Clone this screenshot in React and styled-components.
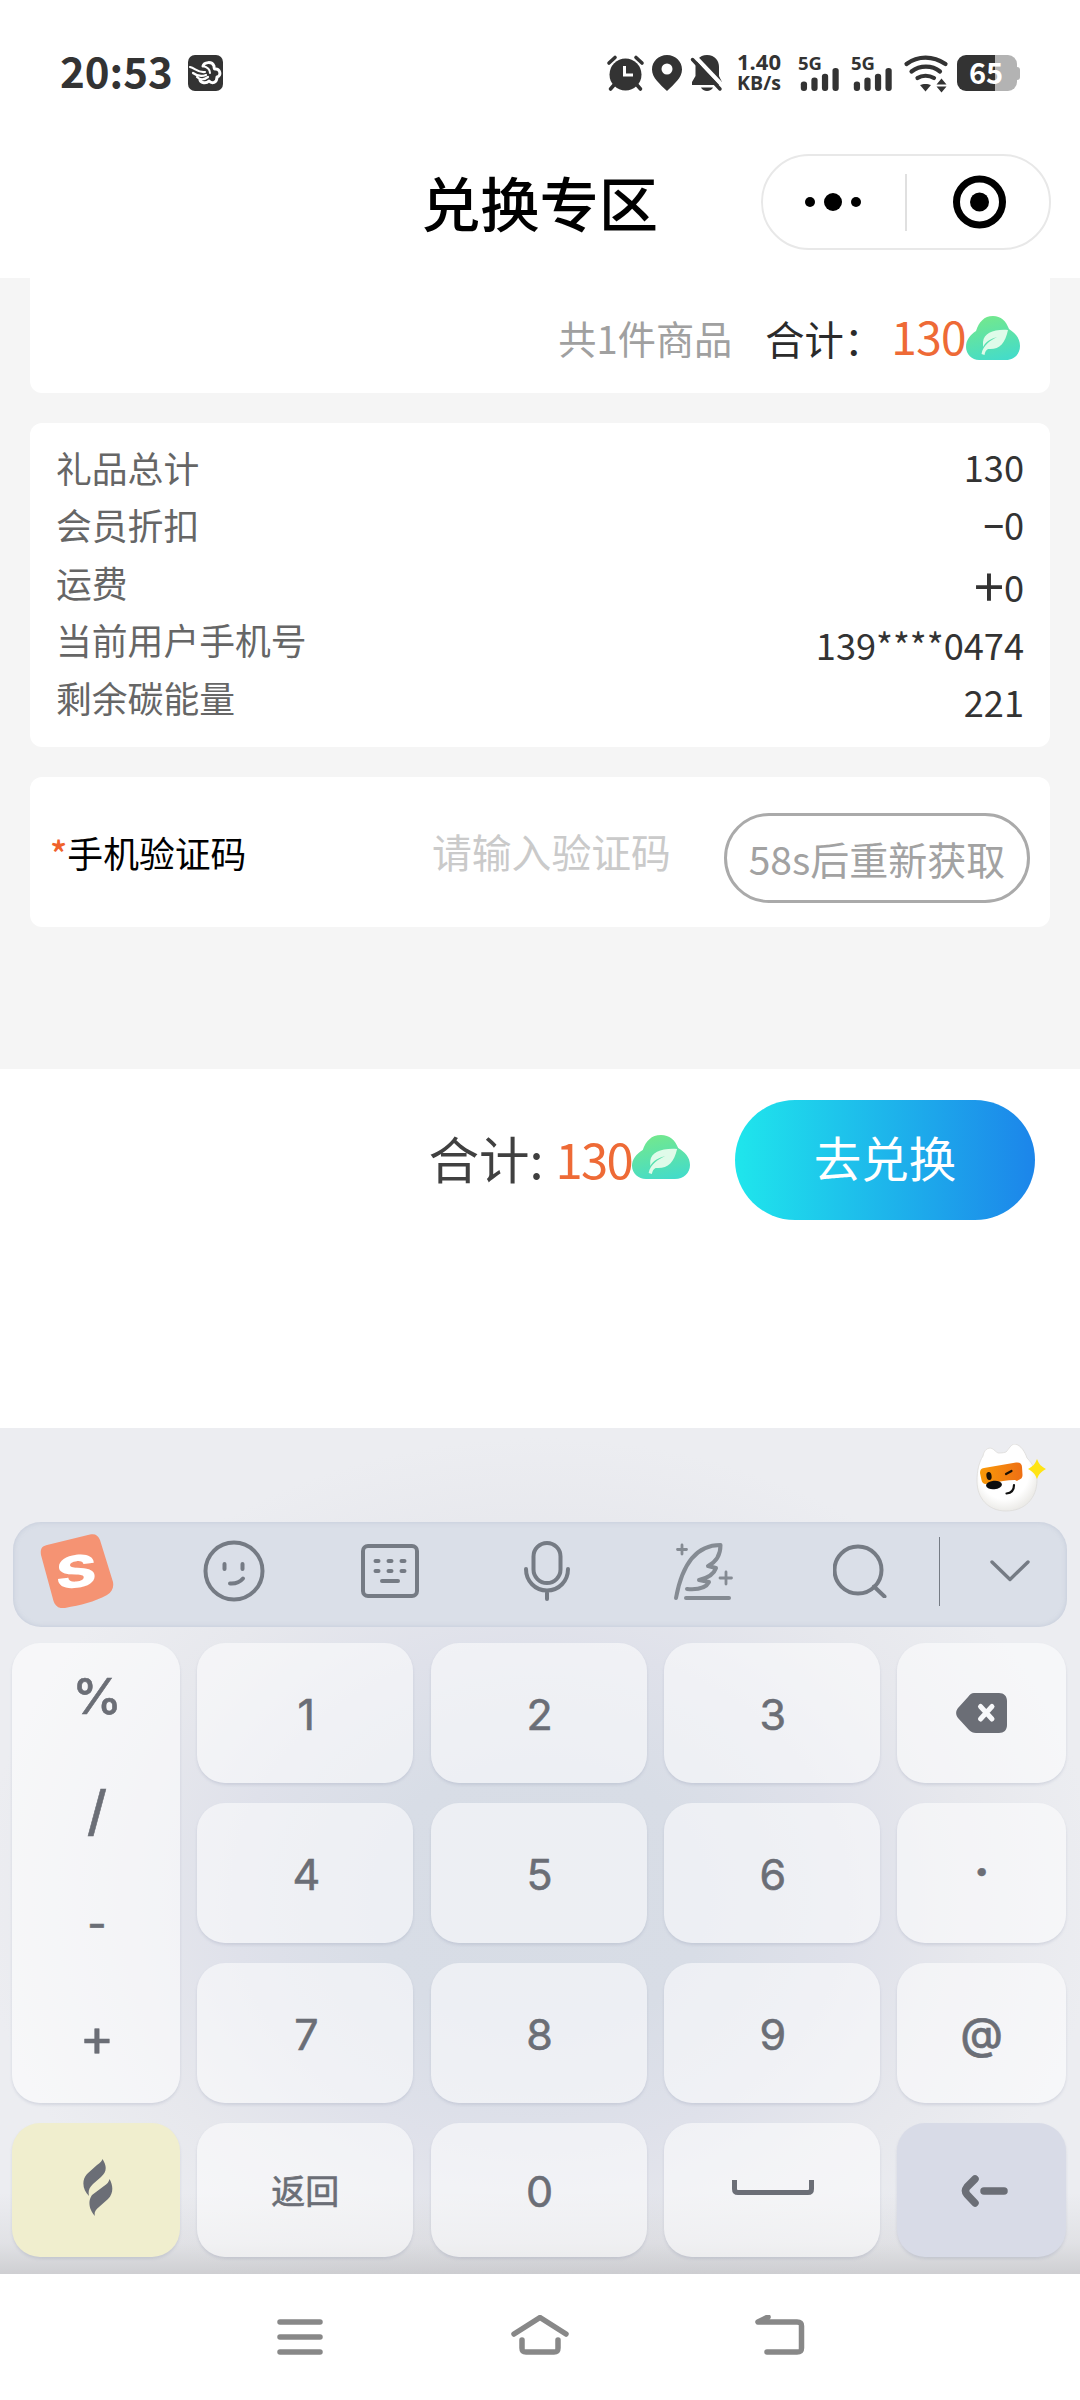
import React from 'react';
import styled, { createGlobalStyle } from 'styled-components';

const GlobalStyle = createGlobalStyle`
  * {
    box-sizing: border-box;
  }
  body {
    margin: 0;
    background: #fff;
    font-family: 'Noto Sans CJK SC', 'Noto Sans', sans-serif;
  }
`;

const Phone = styled.div`
  width: 1080px;
  height: 2400px;
  display: flex;
  flex-direction: column;
  background: #fff;
  overflow: hidden;
`;

/* status bar */

const StatusBar = styled.div`
  height: 126px;
  padding: 55px 63px 35px 60px;
  display: flex;
  align-items: center;
  flex: none;
  color: #333;
`;

const Clock = styled.div`
  font-size: 42px;
  font-weight: 700;
  line-height: 36px;
  width: 128px;
  position: relative;
  top: -3px;
`;

const StatusIcons = styled.div`
  margin-left: auto;
  display: flex;
  align-items: center;
  height: 36px;
`;

const StatusSvg = styled.svg`
  display: block;
  flex: none;
  margin-left: ${(p) => p.$gap || 0}px;
  overflow: visible;
`;

const NetSpeed = styled.div`
  width: 46px;
  margin: -3px 0 0 14px;
  display: flex;
  flex-direction: column;
  align-items: center;
  font-family: 'Open Sans', sans-serif;
  font-weight: 700;
  line-height: 22px;
  white-space: nowrap;
  span:first-child {
    font-size: 22px;
  }
  span:last-child {
    font-size: 19.5px;
  }
`;

const Signal = styled.div`
  width: 42px;
  height: 36px;
  margin-left: ${(p) => p.$gap}px;
  flex: none;
  display: flex;
  flex-direction: column;
  svg {
    margin: -3px 0 0 2px;
  }
`;

const SignalLabel = styled.span`
  font-family: 'Open Sans', sans-serif;
  font-size: 18.5px;
  font-weight: 700;
  line-height: 15px;
  height: 15px;
`;

const Battery = styled.div`
  width: 60px;
  height: 36px;
  margin-left: 9px;
  border-radius: 9px;
  background: linear-gradient(90deg, #333 38px, #b3b3b3 38px);
  color: #fff;
  font-size: 29px;
  font-weight: 700;
  line-height: 32px;
  text-align: center;
  position: relative;
  padding-right: 2px;
  &:after {
    content: '';
    position: absolute;
    right: -3px;
    top: 12px;
    width: 3px;
    height: 13px;
    border-radius: 0 3px 3px 0;
    background: #b3b3b3;
  }
`;

/* title bar */

const TitleBar = styled.div`
  height: 152px;
  flex: none;
  display: grid;
  grid-template-columns: 1fr auto 1fr;
  align-items: center;
`;

const Title = styled.h1`
  grid-column: 2;
  margin: -3px 1px 0 0;
  font-size: 59.3px;
  font-weight: 500;
  line-height: 80px;
  color: #000;
`;

const Capsule = styled.div`
  justify-self: end;
  margin-right: 29px;
  width: 290px;
  height: 96px;
  border: 2px solid #e8e8e8;
  border-radius: 48px;
  display: flex;
  align-items: center;
`;

const CapsuleHalf = styled.div`
  flex: 1;
  display: flex;
  justify-content: center;
  padding-left: 2px;
  &:first-child {
    flex: none;
    width: 142px;
    padding: 0 2px 0 0;
  }
`;

const CapsuleLine = styled.div`
  width: 2px;
  height: 57px;
  background: #e0e0e0;
`;

/* order content */

const Content = styled.div`
  height: 791px;
  flex: none;
  padding: 0 30px;
  background: #f5f5f5;
`;

const Card = styled.div`
  background: #fff;
  border-radius: 12px;
  margin-bottom: 30px;
  display: flex;
`;

const SumCard = styled(Card)`
  height: 115px;
  border-radius: 0 0 12px 12px;
  padding: 4px 30px 0 0;
  justify-content: flex-end;
  align-items: center;
  font-size: 39.3px;
  white-space: nowrap;
`;

const GoodsCount = styled.span`
  color: #a0a0a0;
  font-size: 38.2px;
  margin-right: 33px;
`;

const SumLabel = styled.span`
  color: #2b2b2b;
`;

const Points = styled.span`
  color: #ee6a36;
  font-size: ${(p) => p.$size}px;
  line-height: 1;
  letter-spacing: ${(p) => p.$spacing || 0}px;
  margin-left: ${(p) => p.$gap}px;
  position: relative;
  top: ${(p) => p.$top || 0}px;
`;

const DetailCard = styled(Card)`
  height: 324px;
  padding: 16px 26px 0 26px;
  justify-content: space-between;
`;

const DetailLabels = styled.div`
  display: flex;
  flex-direction: column;
  color: #666;
  font-size: 35.8px;
  line-height: 57.4px;
`;

const DetailValues = styled.div`
  display: flex;
  flex-direction: column;
  text-align: right;
  color: #333;
  font-size: 36.2px;
  line-height: 57.5px;
  margin-top: -1px;
`;

const DetailValue = styled.span`
  margin-top: ${(p) => p.$drop || 0}px;
`;

const Sign = styled.span`
  font-size: ${(p) => p.$size}px;
  font-weight: ${(p) => p.$weight || 400};
  line-height: 0;
  vertical-align: ${(p) => p.$shift || 0}px;
`;

const CodeCard = styled(Card)`
  height: 150px;
  margin-bottom: 0;
  padding: 0 20px 0 20px;
  align-items: center;
`;

const CodeLabel = styled.label`
  flex: 1;
  font-size: 35.8px;
  color: #000;
  em {
    font-style: normal;
    font-weight: 500;
    color: #f0622b;
  }
`;

const CodePlaceholder = styled.span`
  font-size: 39.8px;
  color: #cacaca;
  width: 292px;
  margin-top: -3px;
`;

const ResendButton = styled.button`
  width: 306px;
  height: 90px;
  margin-top: 12px;
  padding: 0;
  border: 3px solid #aaa;
  border-radius: 45px;
  background: #fff;
  color: #a2a2a2;
  font-family: inherit;
  font-size: 39px;
  white-space: nowrap;
`;

/* footer */

const Footer = styled.div`
  height: 182px;
  flex: none;
  padding-right: 45px;
  display: flex;
  justify-content: flex-end;
  align-items: center;
  > svg {
    margin-top: -7px;
  }
`;

const FooterLabel = styled.span`
  font-size: 50.5px;
  color: #404040;
  line-height: 60px;
  margin-top: -6px;
`;

const SubmitButton = styled.button`
  width: 300px;
  height: 120px;
  margin-left: 45px;
  padding: 0 0 7px;
  border: none;
  border-radius: 60px;
  background: linear-gradient(90deg, #1fe6ec, #1c85ea);
  color: #fff;
  font-family: inherit;
  font-size: 47.5px;
`;

/* keyboard */

const Keyboard = styled.div`
  margin-top: auto;
  height: 846px;
  flex: none;
  padding: 16px 13px 0;
  background:
    linear-gradient(180deg, rgba(190, 190, 190, 0) 765px, rgba(180, 180, 182, 0.2) 815px, rgba(170, 170, 172, 0.45) 846px),
    radial-gradient(ellipse 560px 460px at 540px 470px, #d7dce5 0%, #d8dde6 30%, #dfe1ea 55%, #e7e8ed 78%, #ecedf1 100%);
`;

const MascotRow = styled.div`
  height: 78px;
  padding-right: 20px;
  display: flex;
  justify-content: flex-end;
`;

const Toolbar = styled.div`
  height: 105px;
  padding-bottom: 7px;
  border-radius: 28px;
  background: #dadfe8;
  box-shadow: inset 0 0 5px rgba(150, 160, 185, 0.35);
  display: flex;
  align-items: center;
  gap: 28.5px;
`;

const Tool = styled.div`
  width: 128px;
  flex: none;
  display: flex;
  justify-content: center;
`;

const ToolEnd = styled.div`
  flex: 1;
  height: 69px;
  margin-left: -13px;
  border-left: 1px solid #757b84;
  display: flex;
  align-items: center;
  padding-left: 50px;
`;

const Keys = styled.div`
  margin: 16px -1px 0;
  display: grid;
  grid-template-columns: 168px 216px 216px 216px 169px;
  grid-template-rows: 140px 140px 140px 134px;
  column-gap: 17.3px;
  row-gap: 19.9px;
`;

const Key = styled.div`
  border-radius: 28px;
  background: ${(p) => p.$bg || 'rgba(255, 255, 255, 0.54)'};
  box-shadow: 0 2px 3px rgba(120, 130, 160, 0.2);
  display: flex;
  align-items: center;
  justify-content: center;
  color: #6b6e76;
  font-family: Inter, 'Noto Sans CJK SC', sans-serif;
  font-size: ${(p) => p.$size || 43}px;
  font-weight: ${(p) => p.$weight || 400};
  -webkit-text-stroke: 0.6px #6b6e76;
  padding: ${(p) => p.$pad || '2px 0 0 2px'};
`;

const SymbolKey = styled(Key)`
  grid-row: span 3;
  flex-direction: column;
  padding: 0 0 11px 2px;
`;

const KeySymbol = styled.span`
  font-size: ${(p) => p.$size}px;
  font-weight: ${(p) => p.$weight || 400};
  height: 113.5px;
  line-height: 113.5px;
`;

/* system navigation */

const SystemNav = styled.div`
  height: 126px;
  flex: none;
  padding-top: 2px;
  background: #fff;
  display: flex;
  justify-content: center;
  align-items: center;
  gap: 180px;
`;

function CarbonCloud({ width, height, id }) {
  return (
    <svg width={width} height={height} viewBox="0 0 54 44" preserveAspectRatio="none">
      <defs>
        <linearGradient id={id} x1="0.3" y1="0" x2="0.6" y2="1">
          <stop offset="0" stopColor="#74e88c" />
          <stop offset="1" stopColor="#45dcc8" />
        </linearGradient>
      </defs>
      <path
        d="M27 0C35 0 40 5 43 13C49 17 54 22 54 30C54 38 48 44 40 44H13C6 44 0 38 0 31C0 24 4 19 10 15C13 6 18 0 27 0Z"
        fill={`url(#${id})`}
      />
      <path d="M42 14C28 13 18 17 17 26L17 31C20 25 25 23 31 21C25 24 17 29 15.500 38L18.500 39C19 36 20 34 22 33C33 34 39 28 42 14Z" fill="#dffbe9" />
    </svg>
  );
}

function SignalBars({ gap }) {
  return (
    <Signal $gap={gap}>
      <SignalLabel>5G</SignalLabel>
      <svg width="40" height="25" viewBox="0 0 40 25" fill="#333">
        <rect x="0" y="15" width="6.500" height="10" rx="3" />
        <rect x="11" y="11" width="6.500" height="14" rx="3" />
        <rect x="22" y="7" width="6.500" height="18" rx="3" />
        <rect x="33" y="1" width="6.500" height="24" rx="3" />
      </svg>
    </Signal>
  );
}

function StatusRow() {
  return (
    <StatusBar>
      <Clock>20:53</Clock>
      <StatusSvg width="35" height="36" viewBox="0 0 35 36">
        <rect width="35" height="36" rx="7" fill="#333" />
        <g fill="none" stroke="#fff" strokeLinecap="round" strokeLinejoin="round">
          <path d="M2 12C7 13 10 18 17 17M5 18C9 21 13 22 18 20M9 22C12 25 16 25 20 22" strokeWidth="2.200" />
          <path d="M15 11C16 7 24 6 26 11C26 13 26 14 27 14C32 13 34 21 29 22C29 28 24 29 21 26C18 29 13 28 12 25" strokeWidth="3" />
          <path d="M15 11C19 12 22 14 22 18" strokeWidth="2" />
        </g>
      </StatusSvg>
      <StatusIcons>
        <StatusSvg width="37" height="36" viewBox="0 0 37 36">
          <circle cx="18.500" cy="19.500" r="16" fill="#333" />
          <path d="M2 8L8 2.500M29 2.500L35 8M7 30L3.500 34M30 30L33.500 34" stroke="#333" strokeWidth="3.600" strokeLinecap="round" />
          <path d="M17.500 11V20H26" fill="none" stroke="#fff" strokeWidth="3" />
        </StatusSvg>
        <StatusSvg $gap={8} width="30" height="36" viewBox="0 0 30 36">
          <path d="M15 0C23.500 0 30 6.500 30 14.500C30 23 22 29 15 36C8 29 0 23 0 14.500C0 6.500 6.500 0 15 0Z" fill="#333" />
          <circle cx="15" cy="14" r="5.500" fill="#fff" />
        </StatusSvg>
        <StatusSvg $gap={9} width="31" height="36" viewBox="0 0 31 36">
          <path d="M16 0C24 0 28 6 28 12V21L31 27V30H1V27L4.500 21V12C4.500 6 8 0 16 0Z" fill="#333" />
          <path d="M10 32.500H22C20 37 12 37 10 32.500Z" fill="#333" />
          <path d="M3.500 1L32 31" stroke="#fff" strokeWidth="4" />
          <path d="M1.500 4.500L29 34" stroke="#333" strokeWidth="3.500" strokeLinecap="round" />
        </StatusSvg>
        <NetSpeed>
          <span>1.40</span>
          <span>KB/s</span>
        </NetSpeed>
        <SignalBars gap={16} />
        <SignalBars gap={11} />
        <StatusSvg $gap={11} width="44" height="36" viewBox="0 0 44 36">
          <g fill="none" stroke="#333" strokeWidth="4.200" strokeLinecap="round">
            <path d="M2.500 9C14 0.500 29 0.500 41.500 9" />
            <path d="M7.500 16.500C16 10 28 10 36 16.500" />
            <path d="M13.500 23C18 20 25 20 30 23" />
          </g>
          <path d="M16 30C19 28.500 24 28.500 27 30L21.500 36.500Z" fill="#333" />
          <path d="M32.500 29.500L37.500 23.500L42.500 29.500ZM32.500 31.500L37.500 37.500L42.500 31.500Z" fill="#333" />
        </StatusSvg>
        <Battery>65</Battery>
      </StatusIcons>
    </StatusBar>
  );
}

function Mascot() {
  return (
    <svg width="72" height="70" viewBox="0 0 72 70">
      <defs>
        <radialGradient id="fur" cx="0.45" cy="0.4" r="0.6">
          <stop offset="0.7" stopColor="#fff" />
          <stop offset="1" stopColor="#ecebe8" />
        </radialGradient>
        <linearGradient id="mask" x1="0" y1="0" x2="1" y2="0">
          <stop offset="0" stopColor="#fa9a08" />
          <stop offset="1" stopColor="#ee6f14" />
        </linearGradient>
      </defs>
      <path
        d="M8 12C9 6 13 3 17 4.500C19 5.500 21 8 23 9C26 9 28 9 31 8C34 5 36 0 40 0C46 1 50 8 52 14C58 20 62 28 62 36C62 54 50 67 31 67C13 67 2 54 2 37C2 27 4 18 8 12Z"
        fill="url(#fur)"
        stroke="#dddcd9"
        strokeWidth="0.800"
      />
      <path d="M9 24L41 18.500C45 18 47 20 47 23L47.500 31C47.500 35 45 35 42 37L40 36C32 36 24 38 17 38.500L11 40C8 40 7 38 6.500 36L5 29C5 26 6 24.500 9 24Z" fill="url(#mask)" />
      <ellipse cx="14" cy="32" rx="2.600" ry="4" fill="#1c1206" transform="rotate(-8 14 32)" />
      <path d="M31 30L36.500 27" stroke="#1c1206" strokeWidth="2.200" strokeLinecap="round" />
      <ellipse cx="19" cy="41" rx="8" ry="4.300" fill="#0d0d0d" transform="rotate(-6 19 41)" />
      <path d="M39 41C39 46 36 49 31.500 49.500" fill="none" stroke="#111" strokeWidth="2.200" strokeLinecap="round" />
      <path d="M62 15C64.500 21 66 22 71 25C66 28 64.500 29 62 35C59.500 29 58 28 53 25C58 22 59.500 21 62 15Z" fill="#ffe414" />
    </svg>
  );
}

function KeyboardToolbar() {
  const line = { fill: 'none', stroke: '#757b84', strokeWidth: 4, strokeLinecap: 'round', strokeLinejoin: 'round' };
  return (
    <Toolbar>
      <Tool>
        <svg width="74" height="74" viewBox="0 0 74 74">
          <path d="M7 11L50 0.500C55 -0.500 58 1 60 6L73 48C74 54 72 58 67 61C54 68 41 71 25 74C19 75 15 72 13.500 67L1 21C0 15 2 12 7 11Z" fill="#f59373" />
          <text x="0" y="0" transform="translate(36.500 53.500) rotate(-7) skewX(-6) scale(1.420 1)" textAnchor="middle" fontFamily="Inter, sans-serif" fontWeight="800" fontSize="44" fill="#fff">
            S
          </text>
        </svg>
      </Tool>
      <Tool>
        <svg width="62" height="62" viewBox="0 0 62 62" {...line}>
          <circle cx="31" cy="31" r="28.500" />
          <path d="M21.500 24V29M39.500 24V29M27 43.500C33 44 37 42 40 38.500" />
        </svg>
      </Tool>
      <Tool>
        <svg width="58" height="54" viewBox="0 0 58 54" {...line}>
          <rect x="2" y="2" width="54" height="50" rx="5" />
          <path d="M14.500 17H17.500M27.500 17H30.500M40.500 17H43.500M14.500 27H17.500M27.500 27H30.500M40.500 27H43.500M21 37H37" />
        </svg>
      </Tool>
      <Tool>
        <svg width="46" height="60" viewBox="0 0 46 60" {...line}>
          <rect x="9.500" y="2" width="27" height="40" rx="13.500" />
          <path d="M2 28C2 40 11 49.500 23 49.500C35 49.500 44 40 44 28M23 49.500V58" />
        </svg>
      </Tool>
      <Tool>
        <svg width="60" height="60" viewBox="0 0 60 60" {...line} stroke="#858b93">
          <path d="M3 57C7 35 17 4 47.500 4C47.500 12 45 20 35 25L43 27C41 33 35 37 26 39L36 41C33 47 26 49 14 48" />
          <path d="M13 57H56" />
          <path d="M9 4V13M4.500 8.500H13.500M53 31V43M47 37H58.500" strokeWidth="2.800" />
        </svg>
      </Tool>
      <Tool>
        <svg width="54" height="54" viewBox="0 0 54 54" {...line}>
          <circle cx="25" cy="26" r="23.500" />
          <path d="M41 42.500L51.500 52.500" />
        </svg>
      </Tool>
      <ToolEnd>
        <svg width="40" height="24" viewBox="0 0 40 24" {...line} strokeWidth={3.4}>
          <path d="M2 3L20 20.500L38 3" />
        </svg>
      </ToolEnd>
    </Toolbar>
  );
}

const details = [
  { label: '礼品总计', value: '130' },
  { label: '会员折扣', value: <><Sign $size={36} $weight={500}>−</Sign>0</> },
  { label: '运费', value: <><Sign $size={54} $shift={-5}>+</Sign>0</>, drop: 5 },
  { label: '当前用户手机号', value: '139****0474' },
  { label: '剩余碳能量', value: '221' },
];

const symbols = [
  { text: '%', size: 50, weight: 500 },
  { text: '/', size: 54, weight: 500 },
  { text: '-', size: 42 },
  { text: '+', size: 52 },
];

export default function App() {
  return (
    <Phone>
      <GlobalStyle />
      <StatusRow />
      <TitleBar>
        <Title>兑换专区</Title>
        <Capsule>
          <CapsuleHalf>
            <svg width="58" height="20" viewBox="0 0 58 20">
              <circle cx="6" cy="10" r="5" />
              <circle cx="29" cy="10" r="9" />
              <circle cx="52" cy="10" r="5" />
            </svg>
          </CapsuleHalf>
          <CapsuleLine />
          <CapsuleHalf>
            <svg width="54" height="54" viewBox="0 0 54 54">
              <circle cx="27.500" cy="27" r="23" fill="none" stroke="#000" strokeWidth="7" />
              <circle cx="27.500" cy="27" r="9.500" />
            </svg>
          </CapsuleHalf>
        </Capsule>
      </TitleBar>

      <Content>
        <SumCard>
          <GoodsCount>共1件商品</GoodsCount>
          <SumLabel>合计：</SumLabel>
          <Points $size={46} $gap={8} $top={-3} $spacing={-0.6}>130</Points>
          <CarbonCloud id="cloudTop" width={54} height={44} />
        </SumCard>
        <DetailCard>
          <DetailLabels>
            {details.map((d) => (
              <span key={d.label}>{d.label}</span>
            ))}
          </DetailLabels>
          <DetailValues>
            {details.map((d) => (
              <DetailValue key={d.label} $drop={d.drop}>{d.value}</DetailValue>
            ))}
          </DetailValues>
        </DetailCard>
        <CodeCard>
          <CodeLabel><em>*</em>手机验证码</CodeLabel>
          <CodePlaceholder>请输入验证码</CodePlaceholder>
          <ResendButton>58s后重新获取</ResendButton>
        </CodeCard>
      </Content>

      <Footer>
        <FooterLabel>合计:</FooterLabel>
        <Points $size={49} $gap={12} $top={-3} $spacing={-1.7}>130</Points>
        <CarbonCloud id="cloudFoot" width={58} height={44} />
        <SubmitButton>去兑换</SubmitButton>
      </Footer>

      <Keyboard>
        <MascotRow>
          <Mascot />
        </MascotRow>
        <KeyboardToolbar />
        <Keys>
          <SymbolKey $bg="rgba(255, 255, 255, 0.56)">
            {symbols.map((s) => (
              <KeySymbol key={s.text} $size={s.size} $weight={s.weight}>{s.text}</KeySymbol>
            ))}
          </SymbolKey>
          <Key>1</Key>
          <Key>2</Key>
          <Key>3</Key>
          <Key $pad="0">
            <svg width="51" height="40" viewBox="0 0 51 40">
              <path d="M18 0H43C48 0 51 3 51 8V32C51 37 48 40 43 40H20C17 40 15 39 13 37L2 25C-0.500 22 -0.500 18 2 15L12 4C14 1.500 15.500 0 18 0Z" fill="#6b6e76" />
              <path d="M24.500 13.500L36 26M36 13.500L24.500 26" stroke="#f7f8fa" strokeWidth="5" strokeLinecap="round" />
            </svg>
          </Key>
          <Key>4</Key>
          <Key>5</Key>
          <Key>6</Key>
          <Key $size={46} $weight={700} $pad="0 0 3px">·</Key>
          <Key>7</Key>
          <Key>8</Key>
          <Key>9</Key>
          <Key $size={43} $weight={500} $pad="0">@</Key>
          <Key $bg="#f0eece" $pad="0 0 4px 3px">
            <svg width="30" height="58" viewBox="0 0 30 58" fill="#6b6e76">
              <path d="M19.500 0C24 7 24 13 18 18L10 25C6 29 5 32 6 37C0 31 -2 22 4 15L14 6C17 4 19 2 19.500 0Z" />
              <path d="M26.500 20C30 26 31 34 25 40L16 48C12 51 11 54 12 57C7 52 4 43 9 36L21 27C24 25 26 23 26.500 20Z" />
            </svg>
          </Key>
          <Key $size={34} $pad="0">返回</Key>
          <Key>0</Key>
          <Key $pad="0 0 5px 2px">
            <svg width="82" height="15" viewBox="0 0 82 15" fill="none" stroke="#6b6e76" strokeWidth="5">
              <path d="M2.500 0V9C2.500 11.500 3.500 12.500 6 12.500H76C78.500 12.500 79.500 11.500 79.500 9V0" />
            </svg>
          </Key>
          <Key $bg="#d8dbe7" $pad="2px 0 0 6px">
            <svg width="48" height="34" viewBox="0 0 48 34" fill="none" stroke="#6b6e76" strokeWidth="7.500" strokeLinecap="round" strokeLinejoin="round">
              <path d="M14 5L6 13C4 15.500 4 18 6 20.500L14 29M23 17H43" />
            </svg>
          </Key>
        </Keys>
      </Keyboard>

      <SystemNav>
        <svg width="60" height="46" viewBox="0 0 60 46" fill="none" stroke="#888" strokeWidth="5.500" strokeLinecap="round">
          <path d="M10 7H50M10 22H50M10 37H50" />
        </svg>
        <svg width="60" height="46" viewBox="0 0 60 46" fill="none" stroke="#888" strokeWidth="5.500" strokeLinecap="round" strokeLinejoin="round">
          <path d="M4 19L30 2.500L56 19M12 25V33C12 36 13 37 16 37H44C47 37 48 36 48 33V25" />
        </svg>
        <svg width="60" height="46" viewBox="0 0 60 46" fill="none" stroke="#888" strokeWidth="5.500" strokeLinecap="round" strokeLinejoin="round">
          <path d="M18 2L8 7H47C50.500 7 51.500 8 51.500 11V33C51.500 36 50.500 37 47 37H17" />
        </svg>
      </SystemNav>
    </Phone>
  );
}
